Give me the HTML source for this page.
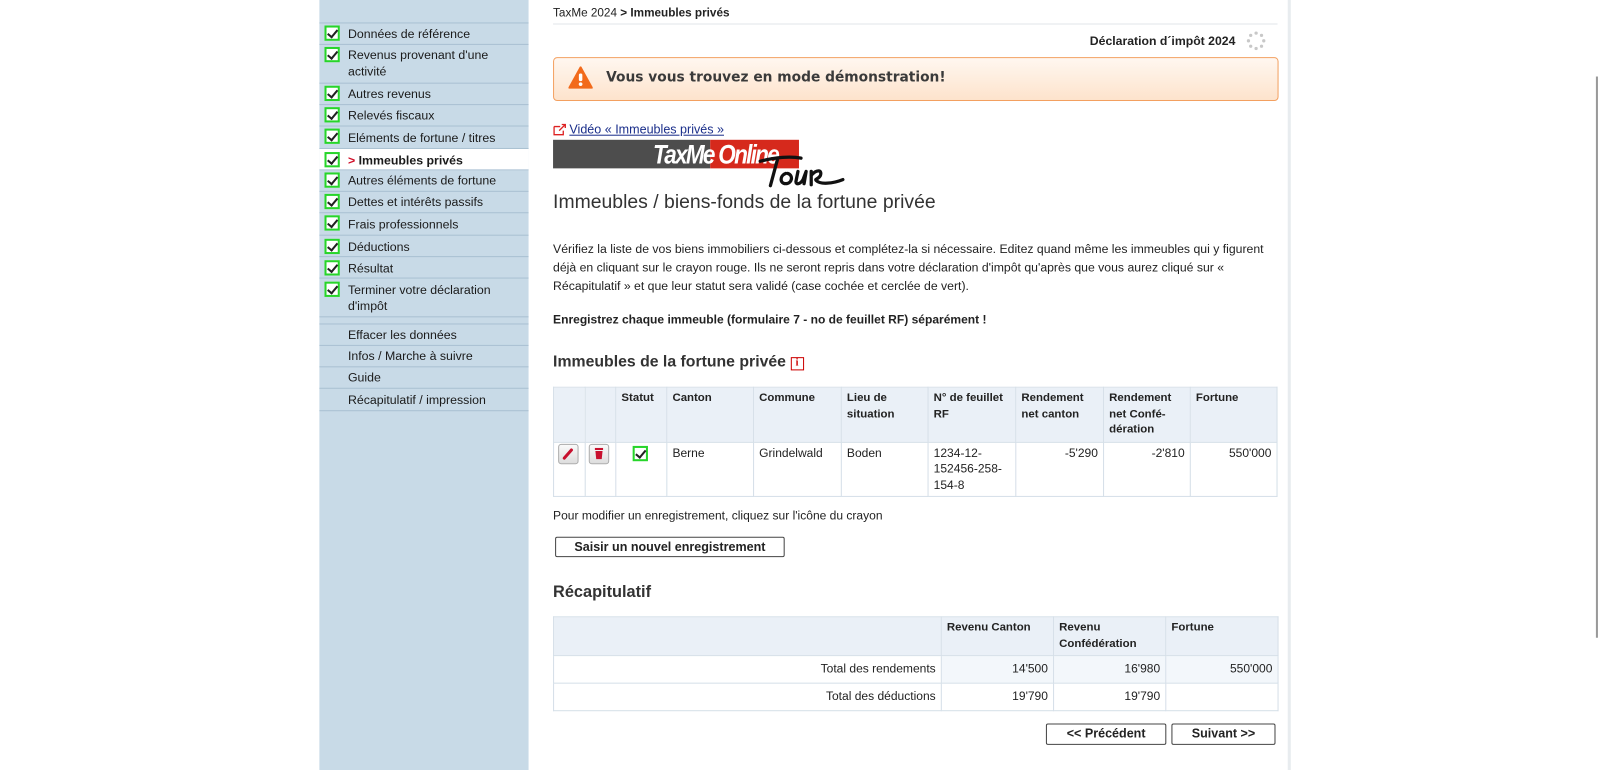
<!DOCTYPE html>
<html><head><meta charset="utf-8"><style>
*{margin:0;padding:0;box-sizing:border-box}
body{width:1600px;height:755px;background:#fff;font-family:"Liberation Sans",Arial,sans-serif;font-size:12px;color:#222;position:relative;overflow:hidden}
#wrap{position:absolute;left:0;top:0;width:1568px;height:740px;transform:scale(1.0204);transform-origin:0 0}
.a{position:absolute}
#side{left:313px;top:0;width:205px;height:755px;background:#c8dae7}
.it{position:absolute;left:0;width:205px;border-bottom:1px solid #a9c0d2;font-size:12.1px;color:#1a1a1a;line-height:16px}
.it .t{position:absolute;left:28px}
.cb{position:absolute;left:5px;width:15px;height:15px;border:2px solid #27d52a;background:#fff}
.cb:after{content:"";position:absolute;left:3px;top:0px;width:4px;height:8px;border:solid #222;border-width:0 2px 2px 0;transform:rotate(40deg)}
table{border-collapse:collapse;position:absolute;table-layout:fixed}
td{border:1px solid #d5dfe8;vertical-align:top;padding:3px 5px;font-size:11.8px;line-height:15.5px;overflow:hidden}
.h td{background:#eaf0f7;font-weight:bold;font-size:11.2px}
.r{text-align:right}
.btn{position:absolute;border:1px solid #444;border-radius:2px;background:#fff;font-weight:bold;font-size:12.3px;text-align:center;line-height:18px}
</style></head><body><div id="wrap">
<div class="a" style="left:1262px;top:0;width:3px;height:755px;background:#e8ecef"></div>
<div class="a" style="left:1564px;top:75px;width:2px;height:550px;background:#999"></div>
<div id="side" class="a">
 <div class="it" style="top:0;height:23px"></div>
 <div class="it" style="top:23px;height:21px"><span class="cb" style="top:2px"></span><span class="t" style="top:2px">Données de référence</span></div>
 <div class="it" style="top:44px;height:38px"><span class="cb" style="top:2px"></span><span class="t" style="top:2px">Revenus provenant d'une<br>activité</span></div>
 <div class="it" style="top:82px;height:21px"><span class="cb" style="top:2px"></span><span class="t" style="top:2px">Autres revenus</span></div>
 <div class="it" style="top:103px;height:21px"><span class="cb" style="top:2px"></span><span class="t" style="top:2px">Relevés fiscaux</span></div>
 <div class="it" style="top:124px;height:22px"><span class="cb" style="top:2px"></span><span class="t" style="top:3px">Eléments de fortune / titres</span></div>
 <div class="it" style="top:146px;height:21px;background:#fff"><span class="cb" style="top:3px"></span><span class="t" style="top:3px;font-weight:bold"><span style="color:#d0102a">&gt;</span> Immeubles privés</span></div>
 <div class="it" style="top:167px;height:21px"><span class="cb" style="top:2px"></span><span class="t" style="top:2px">Autres éléments de fortune</span></div>
 <div class="it" style="top:188px;height:21px"><span class="cb" style="top:2px"></span><span class="t" style="top:2px">Dettes et intérêts passifs</span></div>
 <div class="it" style="top:209px;height:22px"><span class="cb" style="top:2px"></span><span class="t" style="top:3px">Frais professionnels</span></div>
 <div class="it" style="top:231px;height:21px"><span class="cb" style="top:3px"></span><span class="t" style="top:3px">Déductions</span></div>
 <div class="it" style="top:252px;height:21px"><span class="cb" style="top:3px"></span><span class="t" style="top:3px">Résultat</span></div>
 <div class="it" style="top:273px;height:38px"><span class="cb" style="top:3px"></span><span class="t" style="top:3px">Terminer votre déclaration<br>d'impôt</span></div>
 <div class="it" style="top:311px;height:7px;border-bottom:1px solid #a9c0d2"></div>
 <div class="it" style="top:318px;height:21px"><span class="t" style="top:2px">Effacer les données</span></div>
 <div class="it" style="top:339px;height:21px"><span class="t" style="top:2px">Infos / Marche à suivre</span></div>
 <div class="it" style="top:360px;height:21px"><span class="t" style="top:2px">Guide</span></div>
 <div class="it" style="top:381px;height:22px"><span class="t" style="top:3px">Récapitulatif / impression</span></div>
</div>

<div class="a" style="left:542px;top:7px;font-size:11.5px">TaxMe 2024 <b>&gt; Immeubles privés</b></div>
<div class="a" style="left:542px;top:23px;width:710px;height:1px;background:#e2e6ea"></div>
<div class="a" style="left:1068px;top:33px;font-size:12px;font-weight:bold">Déclaration d´impôt 2024</div>
<svg class="a" style="left:1221px;top:30px" width="20" height="20" viewBox="0 0 20 20"><g fill="#c8c8c8"><circle cx="10" cy="2.5" r="1.6"/><circle cx="15.3" cy="4.7" r="1.6"/><circle cx="17.5" cy="10" r="1.6"/><circle cx="15.3" cy="15.3" r="1.6"/><circle cx="10" cy="17.5" r="1.6"/><circle cx="4.7" cy="15.3" r="1.6"/><circle cx="2.5" cy="10" r="1.6"/><circle cx="4.7" cy="4.7" r="1.6"/></g></svg>
<div class="a" style="left:542px;top:56px;width:711px;height:43px;border:1px solid #f3a060;border-radius:4px;background:linear-gradient(#fff7f0,#fde3cc)"></div>
<svg class="a" style="left:557px;top:65px" width="24" height="22" viewBox="0 0 24 22"><path d="M12 1 L23 21 L1 21 Z" fill="#f26a1b" stroke="#f26a1b" stroke-linejoin="round" stroke-width="2"/><rect x="10.3" y="7" width="3.4" height="7.5" rx="1.5" fill="#fff"/><circle cx="12" cy="17.5" r="1.8" fill="#fff"/></svg>
<div class="a" style="left:594px;top:68px;font-family:'DejaVu Sans',sans-serif;font-weight:bold;font-size:13.5px;color:#3a3a3a">Vous vous trouvez en mode démonstration!</div>

<svg class="a" style="left:542px;top:121px" width="14" height="12" viewBox="0 0 14 12"><path d="M1 3h6M1 3v8h9V7" fill="none" stroke="#d22" stroke-width="1.3"/><path d="M6 7L12 1M8.5 1H12V4.5" fill="none" stroke="#d22" stroke-width="1.3"/></svg>
<div class="a" style="left:558px;top:120px;font-size:12.3px;color:#1a2e8a;text-decoration:underline">Vidéo « Immeubles privés »</div>
<div class="a" style="left:542px;top:137px;width:154px;height:28px;background:#4d4d4d"></div>
<div class="a" style="left:696px;top:137px;width:87px;height:28px;background:#d6291c"></div>
<div class="a" style="left:640px;top:136px;font-size:26px;font-weight:bold;font-style:italic;color:#fff;letter-spacing:-2px;transform:scaleX(.85);transform-origin:left">TaxMe Online</div>
<svg class="a" style="left:740px;top:150px" width="90" height="38" viewBox="0 0 90 38"><path d="M5 8 C20 4 35 3 45 5 M22 6 L15 32 M30 20 C24 22 24 30 30 30 C36 30 38 22 32 20 M42 18 L40 28 C40 31 44 31 47 26 L50 18 L48 30 M55 18 L55 31 M55 22 C60 16 66 16 64 22 C62 26 58 25 60 27 C64 31 76 30 86 26" fill="none" stroke="#111" stroke-width="3.2" stroke-linecap="round" stroke-linejoin="round"/></svg>
<div class="a" style="left:542px;top:188px;font-size:19px;color:#333">Immeubles / biens-fonds de la fortune privée</div>
<div class="a" style="left:542px;top:235px;width:715px;font-size:12px;line-height:18px;color:#222">Vérifiez la liste de vos biens immobiliers ci-dessous et complétez-la si nécessaire. Editez quand même les immeubles qui y figurent déjà en cliquant sur le crayon rouge. Ils ne seront repris dans votre déclaration d'impôt qu'après que vous aurez cliqué sur « Récapitulatif » et que leur statut sera validé (case cochée et cerclée de vert).</div>
<div class="a" style="left:542px;top:306px;font-size:11.8px;font-weight:bold">Enregistrez chaque immeuble (formulaire 7 - no de feuillet RF) séparément !</div>
<div class="a" style="left:542px;top:346px;font-size:15.5px;font-weight:bold;color:#333;white-space:nowrap">Immeubles de la fortune privée <span style="display:inline-block;vertical-align:1px;width:13px;height:13px;border:1.5px solid #c00;color:#c00;font-size:10px;font-weight:bold;text-align:center;line-height:10px;font-family:'Liberation Serif',serif">i</span></div>

<table style="left:542px;top:379px;width:710px">
<colgroup><col style="width:31px"><col style="width:30px"><col style="width:50px"><col style="width:85px"><col style="width:86px"><col style="width:85px"><col style="width:86px"><col style="width:86px"><col style="width:85px"><col></colgroup>
<tr class="h" style="height:53px"><td></td><td></td><td>Statut</td><td>Canton</td><td>Commune</td><td>Lieu de<br>situation</td><td>N° de feuillet<br>RF</td><td>Rendement<br>net canton</td><td>Rendement<br>net Confé-<br>dération</td><td>Fortune</td></tr>
<tr style="height:53px"><td></td><td></td><td></td><td>Berne</td><td>Grindelwald</td><td>Boden</td><td>1234-12-<br>152456-258-<br>154-8</td><td class="r">-5'290</td><td class="r">-2'810</td><td class="r">550'000</td></tr>
</table>
<div class="a" style="left:547px;top:435px;width:20px;height:20px;border:1px solid #aaa;border-radius:3px;background:linear-gradient(#fafafa,#ddd)"><svg width="18" height="18" viewBox="0 0 18 18"><path d="M5 13 L12 5" stroke="#c8102e" stroke-width="3" stroke-linecap="round"/></svg></div>
<div class="a" style="left:577px;top:435px;width:20px;height:20px;border:1px solid #aaa;border-radius:3px;background:linear-gradient(#fafafa,#ddd)"><svg width="18" height="18" viewBox="0 0 18 18"><rect x="5" y="3" width="8" height="2" fill="#c8102e"/><path d="M5.5 6h7l-.8 8h-5.4z" fill="#c8102e"/></svg></div>
<div class="cb" style="left:620px;top:437px"></div>

<div class="a" style="left:542px;top:498px;font-size:11.8px">Pour modifier un enregistrement, cliquez sur l'icône du crayon</div>
<div class="btn" style="left:544px;top:526px;width:225px;height:20px">Saisir un nouvel enregistrement</div>
<div class="a" style="left:542px;top:572px;font-size:16px;font-weight:bold;color:#333">Récapitulatif</div>

<table style="left:542px;top:604px;width:711px">
<colgroup><col style="width:380px"><col style="width:110px"><col style="width:110px"><col></colgroup>
<tr class="h" style="height:38px"><td></td><td>Revenu Canton</td><td>Revenu<br>Confédération</td><td>Fortune</td></tr>
<tr style="height:27px"><td class="r" style="padding-top:5px">Total des rendements</td><td class="r" style="background:#f3f7fb;padding-top:5px">14'500</td><td class="r" style="background:#f3f7fb;padding-top:5px">16'980</td><td class="r" style="background:#f3f7fb;padding-top:5px">550'000</td></tr>
<tr style="height:27px"><td class="r" style="padding-top:5px">Total des déductions</td><td class="r" style="padding-top:5px">19'790</td><td class="r" style="padding-top:5px">19'790</td><td></td></tr>
</table>
<div class="btn" style="left:1025px;top:709px;width:118px;height:21px">&lt;&lt; Précédent</div>
<div class="btn" style="left:1148px;top:709px;width:102px;height:21px">Suivant &gt;&gt;</div>
</div></body></html>
